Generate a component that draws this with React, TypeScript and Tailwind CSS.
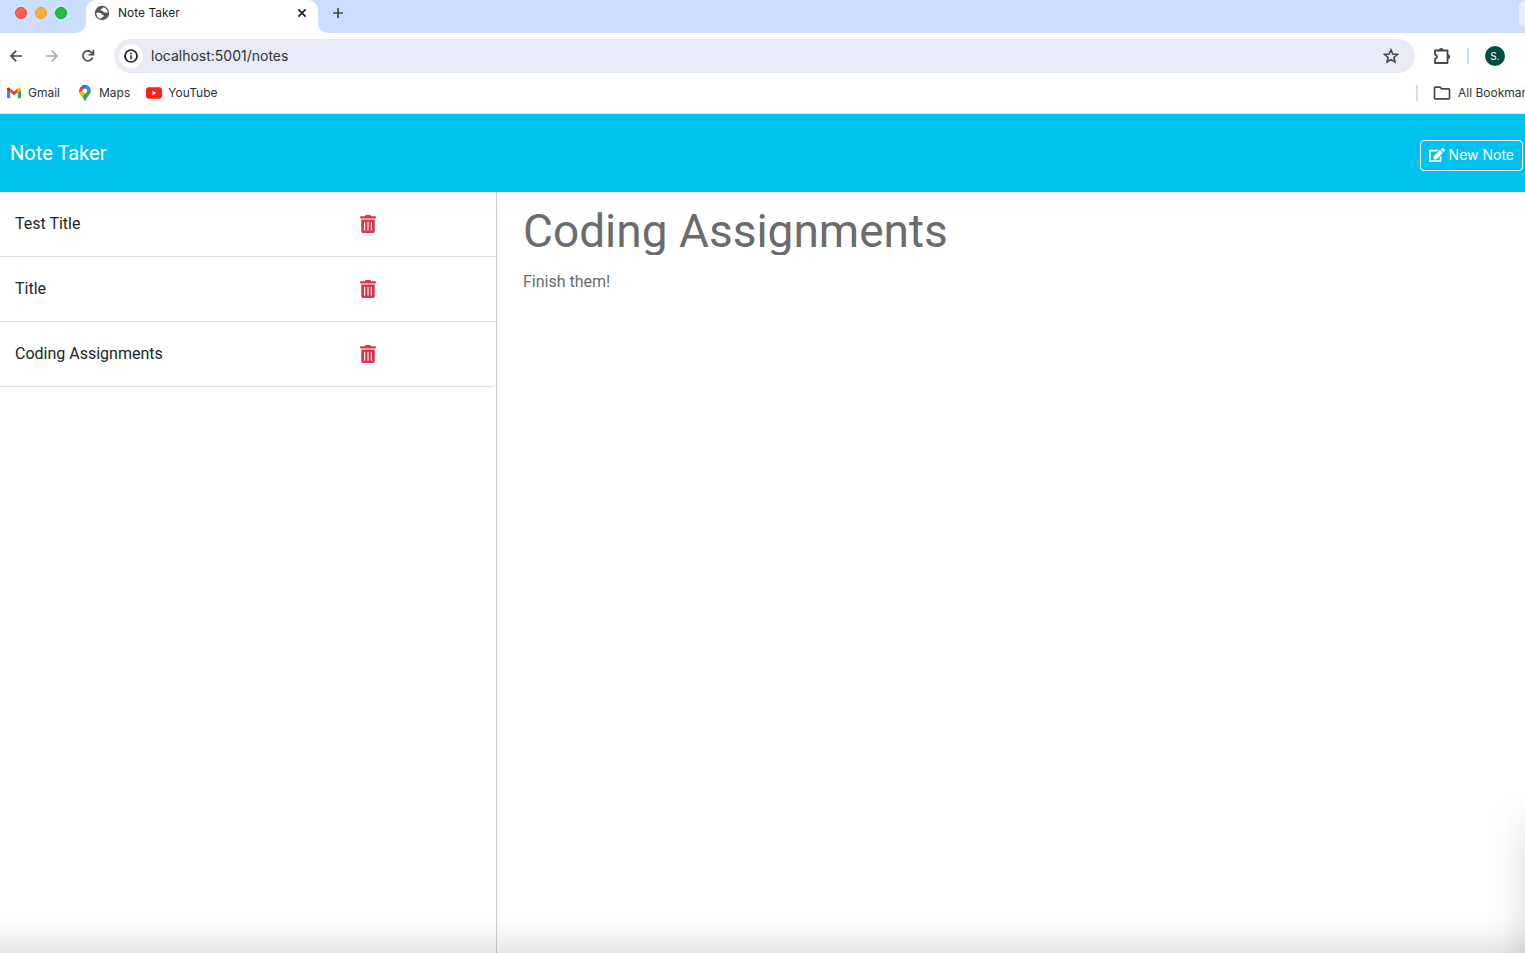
import type { ReactNode } from 'react';
import { FaEdit, FaTrashAlt } from 'react-icons/fa';
import { MdOutlineFolder } from 'react-icons/md';

const notes = ['Test Title', 'Title', 'Coding Assignments'];

function LineIcon({ children, size = 16 }: { children: ReactNode; size?: number }) {
  return (
    <svg
      width={size}
      height={size}
      viewBox="0 0 16 16"
      fill="none"
      stroke="currentColor"
      strokeWidth="1.7"
      aria-hidden="true"
    >
      {children}
    </svg>
  );
}

function GlobeIcon() {
  return (
    <svg width="16" height="16" viewBox="0 0 16 16" aria-hidden="true">
      <circle cx="8" cy="8" r="7.2" fill="#53575b" />
      <path
        d="M2.200 7.900C4 7.500 6.400 7.600 7.500 8.600c.5.500.4 1.300 1.300 1.500 1.200.2 1.300.8.700 1.500-.8.800-1.700 1.100-2.500 2.200-2.700-.5-4.700-2.900-4.800-5.900z"
        fill="#fff"
      />
      <path
        d="M9 2.300c.2.900-.5 1.200-1.300 1.500-1.300.4-1.500 1.400-.5 1.700.9.200 1.500.1 1.800.8.400.9 1.100 1.400 2.100 1.200.9-.2 1.400.4 2.700.4C13.700 5 11.900 2.800 9 2.300z"
        fill="#fff"
      />
    </svg>
  );
}

function GmailIcon() {
  return (
    <svg width="14" height="14" viewBox="0 0 14 14" aria-hidden="true">
      <path d="M0 4v7.200c0 .6.4 1 1 1h2.200V6.300z" fill="#4285f4" />
      <path d="M14 4v7.200c0 .6-.4 1-1 1h-2.200V6.300z" fill="#34a853" />
      <path d="M10.800 2.600v3.700L14 4V3.100c0-1.400-1.500-2-2.500-1.100z" fill="#fbbc04" />
      <path d="M0 3.100V4l3.200 2.300V2.600L2.500 2C1.500 1.200 0 1.700 0 3.100z" fill="#c5221f" />
      <path d="M3.200 2.600 7 5.500l3.800-2.900v3.700L7 9.200 3.200 6.300z" fill="#ea4335" />
    </svg>
  );
}

function MapsIcon() {
  return (
    <svg width="12" height="16" viewBox="0 0 12 16" aria-hidden="true">
      <defs>
        <clipPath id="pin">
          <path d="M6 0a5.700 5.700 0 0 0-5.700 5.800c0 2 .8 3.300 2 4.800C3.800 12.400 4.700 13.400 5.200 15.200c.2.900 1.400.9 1.600 0 .5-1.800 1.400-2.800 2.900-4.600 1.200-1.500 2-2.800 2-4.800A5.700 5.700 0 0 0 6 0z" />
        </clipPath>
      </defs>
      <g clipPath="url(#pin)">
        <path d="M0 0h12v16H0z" fill="#34a853" />
        <path d="M3 0h9L6 7z" fill="#4285f4" />
        <path d="M9.500 1 12 0v3.500L7.600 7.600 4.400 3.900 7.500 0z" fill="#4285f4" />
        <path d="M1.500 2.200 4 0h4L4.400 4z" fill="#1a73e8" />
        <path d="M-1 1.200 1.600 1.400 4.400 3.900.6 8.500-1 8z" fill="#ea4335" />
        <path d="M.2 8.200 4.300 3.800 7.600 7.500 2.600 12.500z" fill="#fbbc04" />
      </g>
      <circle cx="6" cy="5.700" r="2.200" fill="#fff" />
    </svg>
  );
}

function YouTubeIcon() {
  return (
    <svg width="16" height="12" viewBox="0 0 16 12" aria-hidden="true">
      <rect y=".3" width="16" height="11.400" rx="3" fill="#ff1f10" />
      <path d="M6.400 3.700v4.600L10.400 6z" fill="#fff" />
    </svg>
  );
}

function ExtensionIcon() {
  return (
    <svg width="18" height="18" viewBox="0 0 18 18" aria-hidden="true">
      <path
        d="M2 3.500h12.500v12.500H2v-4.200c2.600-.6 2.600-3.500 0-4.100z"
        fill="none"
        stroke="#474747"
        strokeWidth="1.800"
        strokeLinejoin="round"
      />
      <path d="M6 3.200a2.200 2.200 0 0 1 4.400 0zM15 7.600a2.200 2.200 0 0 1 0 4.400z" fill="#474747" />
    </svg>
  );
}

function TabStrip() {
  return (
    <div className="flex h-[33px] items-stretch bg-[#ccdefd]">
      <div className="flex w-[86px] gap-2 pt-[7px] pl-[15px]">
        <button aria-label="Close window" className="size-3 rounded-full border border-[#e2463f] bg-[#ff5f57]" />
        <button aria-label="Minimize window" className="size-3 rounded-full border border-[#e09e2c] bg-[#ffb02e]" />
        <button aria-label="Zoom window" className="size-3 rounded-full border border-[#17a82e] bg-[#1fbf3b]" />
      </div>
      <div className="relative flex w-[232px] items-start rounded-t-[10px] bg-white px-2 pt-[3px]">
        <svg className="absolute bottom-0 -left-2.5" width="10" height="10" aria-hidden="true">
          <path d="M10 0v10H0A10 10 0 0 0 10 0z" fill="#fff" />
        </svg>
        <svg className="absolute -right-2.5 bottom-0" width="10" height="10" aria-hidden="true">
          <path d="M0 0v10h10A10 10 0 0 1 0 0z" fill="#fff" />
        </svg>
        <div className="flex h-5 flex-1 items-center gap-2">
          <GlobeIcon />
          <span className="flex-1 text-xs text-[#1f1f1f]">Note Taker</span>
          <button aria-label="Close tab" className="text-[#1f1f1f]">
            <LineIcon>
              <path d="M4.400 4.400l7.200 7.200M11.600 4.400l-7.200 7.200" />
            </LineIcon>
          </button>
        </div>
      </div>
      <button aria-label="New tab" className="ml-3 flex h-[26px] items-center text-[#474747]">
        <LineIcon>
          <path d="M8 3v10M3 8h10" />
        </LineIcon>
      </button>
      <div className="ml-auto h-[27px] w-[6px] rounded-l-lg bg-[#e6eefd]" />
    </div>
  );
}

function Toolbar() {
  return (
    <div className="flex h-[46px] items-center pr-5">
      <button aria-label="Back" className="ml-2 text-[#474747]">
        <LineIcon>
          <path d="M14 8H3.200M8.300 2.700 3 8l5.300 5.300" />
        </LineIcon>
      </button>
      <button aria-label="Forward" className="ml-5 text-[#aaaaaa]">
        <LineIcon>
          <path d="M2 8h10.800M7.700 2.700 13 8l-5.300 5.300" />
        </LineIcon>
      </button>
      <button aria-label="Reload" className="ml-5 text-[#474747]">
        <LineIcon>
          <path d="M12.600 9.500A5 5 0 1 1 11.800 4.700l1.400 1.500" />
          <path d="M13.400 1.800v4.900H8.500" />
        </LineIcon>
      </button>
      <div className="ml-[18px] flex h-[34px] flex-1 items-center rounded-full bg-[#e8ebf5] pr-4 pl-[5px]">
        <span className="flex size-6 items-center justify-center rounded-full bg-white text-[#1f1f1f]">
          <LineIcon>
            <circle cx="8" cy="8" r="6" />
            <path d="M8 7.200v4M8 4.600v1.600" strokeWidth="1.500" />
          </LineIcon>
        </span>
        <input
          aria-label="Address"
          defaultValue="localhost:5001/notes"
          className="ml-2 min-w-0 flex-1 bg-transparent text-sm text-[#303134] outline-none"
        />
        <button aria-label="Bookmark this page" className="text-[#474747]">
          <LineIcon>
            <path
              d="M8 1.900l1.800 4.200 4.600.4-3.500 3 1.100 4.500L8 11.600 4 14l1.100-4.500-3.500-3 4.600-.4z"
              strokeWidth="1.600"
            />
          </LineIcon>
        </button>
      </div>
      <button aria-label="Extensions" className="ml-[18px]">
        <ExtensionIcon />
      </button>
      <span className="ml-4 h-4 w-0.5 bg-[#ccdefd]" />
      <button aria-label="Profile" className="ml-4 size-5 rounded-full bg-[#004d40] text-[10px] text-white">
        S.
      </button>
    </div>
  );
}

function BookmarksBar() {
  return (
    <div className="flex h-[35px] items-center overflow-hidden border-b border-[#e0e3e8] pb-1.5 pl-[7px] text-xs whitespace-nowrap text-[#303134]">
      <a href="#gmail" className="flex items-center gap-[7px]">
        <GmailIcon />
        Gmail
      </a>
      <a href="#maps" className="ml-[19px] flex items-center gap-2">
        <MapsIcon />
        Maps
      </a>
      <a href="#youtube" className="ml-4 flex items-center gap-1.5">
        <YouTubeIcon />
        YouTube
      </a>
      <div className="ml-auto flex w-[109px] items-center">
        <span className="h-4 w-0.5 shrink-0 bg-[#ccdefd]" />
        <button className="ml-[14px] flex shrink-0 items-center gap-[6px]">
          <MdOutlineFolder size={20} color="#474747" />
          All Bookmarks
        </button>
      </div>
    </div>
  );
}

export default function App() {
  return (
    <div className="relative flex min-h-screen flex-col overflow-hidden bg-white font-['Inter','Liberation_Sans',sans-serif]">
      <TabStrip />
      <Toolbar />
      <BookmarksBar />

      <header className="flex h-[78px] items-center justify-between bg-[#00c2ef] pr-0.5 pl-2.5 text-white">
        <a href="#home" className="font-['Roboto',sans-serif] text-xl">
          Note Taker
        </a>
        <button className="mt-1 flex h-[31px] items-center gap-1 rounded border border-white px-2 text-sm">
          <FaEdit size={16} />
          New Note
        </button>
      </header>

      <main className="flex flex-1 font-['Roboto',sans-serif]">
        <aside className="w-[497px] shrink-0 border-r border-[#cccccc]">
          <ul>
            {notes.map((note) => (
              <li
                key={note}
                className="flex h-[65px] items-center border-b border-[#dfdfdf] pl-[15px] text-[#212529] last:rounded-br"
              >
                <button className="w-[344px] text-left text-base">{note}</button>
                <button aria-label={`Delete ${note}`} className="text-[#dc3545]">
                  <FaTrashAlt size={18} />
                </button>
              </li>
            ))}
          </ul>
        </aside>
        <section className="flex min-w-0 flex-1 flex-col px-[26px] pt-[15px] text-[#6b6b6b]">
          <input
            aria-label="Note title"
            readOnly
            defaultValue="Coding Assignments"
            className="h-12 w-full text-[46px] leading-[48px] outline-none"
          />
          <textarea
            aria-label="Note text"
            readOnly
            defaultValue="Finish them!"
            className="mt-[15px] w-full flex-1 resize-none text-base outline-none"
          />
        </section>
      </main>

      <div className="pointer-events-none absolute inset-x-0 bottom-0 h-10 bg-linear-to-t from-black/10 via-black/3 to-transparent" />
      <div className="pointer-events-none absolute right-0 bottom-0 h-[160px] w-10 bg-linear-to-l from-black/8 via-black/2 to-transparent mask-t-from-60%" />
    </div>
  );
}
